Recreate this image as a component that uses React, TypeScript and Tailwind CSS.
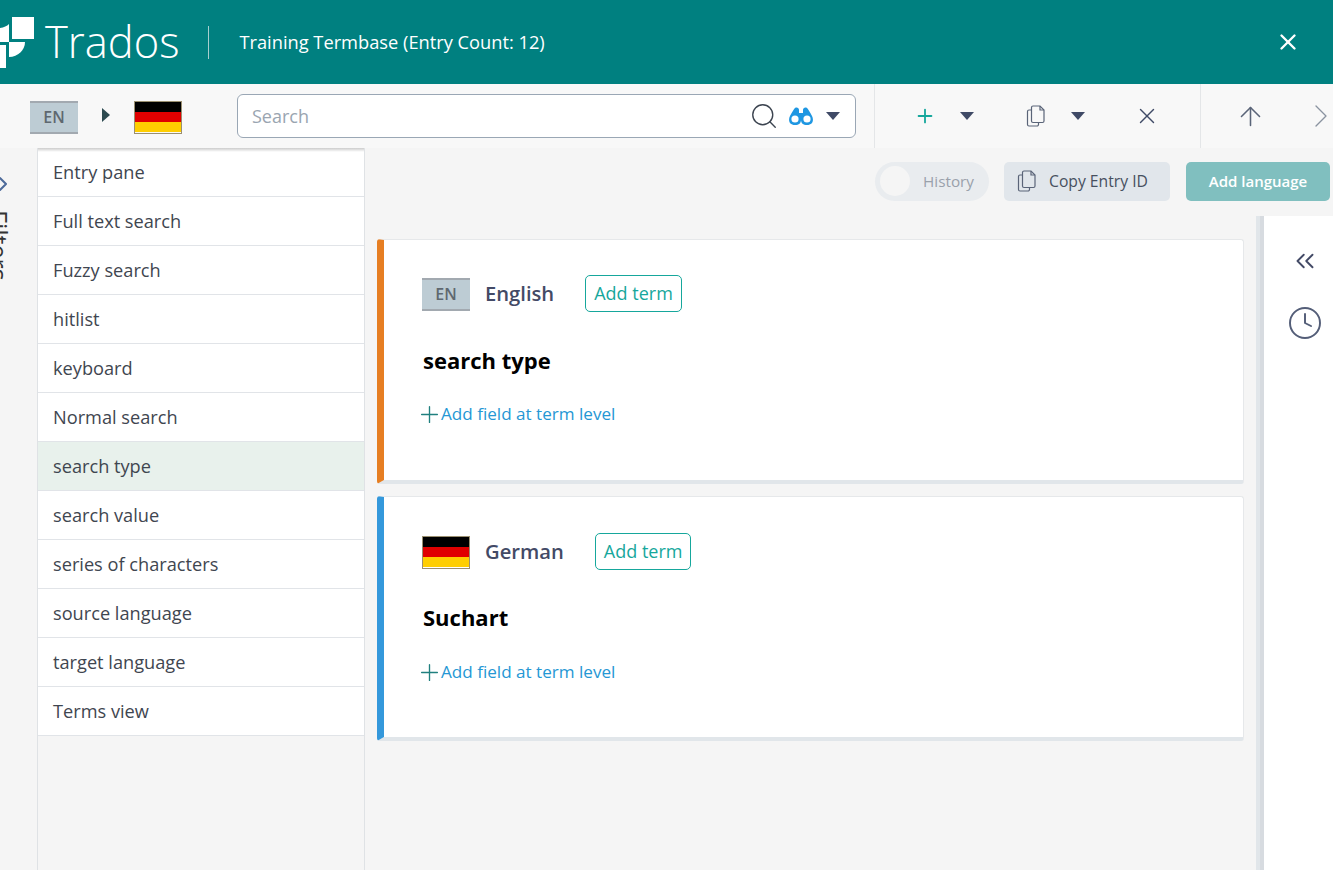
import { ChevronRight, ChevronsLeft, Clock, ArrowUp, Plus, X, Search } from "lucide-react";

const TERMS = [
  "Entry pane",
  "Full text search",
  "Fuzzy search",
  "hitlist",
  "keyboard",
  "Normal search",
  "search type",
  "search value",
  "series of characters",
  "source language",
  "target language",
  "Terms view",
];

function Logo() {
  return (
    <svg width="34" height="52" viewBox="0 0 34 52" className="shrink-0 mt-px" fill="white">
      <path d="M12 0h22v22H12z" />
      <path d="M0 11Q6 10 9 7V25H0z" />
      <path d="M9 25H25C25 33 18 40 9 40z" />
      <path d="M0 28H6V51H0z" />
    </svg>
  );
}

function Caret({ className = "" }: { className?: string }) {
  return (
    <svg width="14" height="8" viewBox="0 0 14 8" className={`shrink-0 ${className}`}>
      <path d="M0 0h14L7 8z" fill="#3f4a66" />
    </svg>
  );
}

function CopyIcon({ className = "" }: { className?: string }) {
  return (
    <svg width="20" height="22" viewBox="0 0 20 22" fill="none" stroke="#5a6478" strokeWidth="1.2" className={`shrink-0 ${className}`}>
      <path d="M7 1h7l4 4v11a1.500 1.500 0 0 1-1.500 1.500H7A1.500 1.500 0 0 1 5.500 16V2.500A1.500 1.500 0 0 1 7 1z" />
      <path d="M14 1v4h4" />
      <path d="M5.500 5H3a1.500 1.500 0 0 0-1.500 1.500v13A1.500 1.500 0 0 0 3 21h8a1.500 1.500 0 0 0 1.500-1.500v-2" />
    </svg>
  );
}

function Binoculars() {
  return (
    <svg width="26" height="18" viewBox="0 0 26 18" className="shrink-0">
      <path d="M7 1c2-1 4 0 4 2v3h4V3c0-2 2-3 4-2 1 1 3 4 5 8 2 4 1 9-5 9-4 0-6-2-6-5h-.001c0 3-2 5-6 5-6 0-7-5-5-9 2-4 4-7 5-8z" fill="#1f97e2" />
      <circle cx="7" cy="12" r="3.600" fill="white" />
      <circle cx="19" cy="12" r="3.600" fill="white" />
    </svg>
  );
}

function EnFlag() {
  return (
    <div className="w-12 h-[33px] shrink-0 bg-[#bdccd4] border-y-2 border-[#a2a9b0] flex items-center justify-center text-[16px] font-semibold text-[#5f6870]">
      EN
    </div>
  );
}

function DeFlag() {
  return (
    <div className="w-12 h-[33px] shrink-0 flex flex-col border border-[#9a8f70]">
      <div className="flex-1 bg-black" />
      <div className="flex-1 bg-[#e00000]" />
      <div className="flex-1 bg-[#ffce00]" />
    </div>
  );
}

type CardProps = {
  accent: string;
  flag: React.ReactNode;
  lang: string;
  term: string;
  top: string;
  termGap: string;
  fieldGap: string;
};

function TermCard({ accent, flag, lang, term, top, termGap, fieldGap }: CardProps) {
  return (
    <div className={`h-[245px] shrink-0 bg-white rounded-[3px] border border-[#e6e8ea] border-b-4 border-b-[#e1e6ea] border-l-[7px] ${accent} pl-[38px] ${top}`}>
      <div className="flex items-center h-[37px]">
        <div className="mt-px">{flag}</div>
        <span className="ml-[15px] text-[20.200px] font-semibold text-[#434a66]">{lang}</span>
        <button className="ml-[31px] h-[37px] px-2 rounded-[5px] border border-[#16a79c] text-[18px] text-[#16a79c]">Add term</button>
      </div>
      <div className={`${termGap} ml-px text-[22px] font-bold text-black leading-[36px]`}>{term}</div>
      <div className={`${fieldGap} flex items-center text-[17.100px] text-[#2597d4] leading-6`}>
        <Plus size={27} strokeWidth={1.2} className="text-[#20807f] -my-[2px] -ml-[6px] -mr-[2px] shrink-0" />
        <span>Add field at term level</span>
      </div>
    </div>
  );
}

export default function App() {
  return (
    <div className="w-[1333px] h-[870px] overflow-hidden flex flex-col bg-[#f5f5f5] font-['Open_Sans','Noto_Sans',sans-serif]">
      {/* header */}
      <header className="h-[84px] shrink-0 bg-[#008080] flex items-center text-white">
        <Logo />
        <span className="ml-[11px] text-[43.500px] font-light leading-none">Trados</span>
        <div className="ml-[29px] w-px h-[33px] bg-[#a7cfcf]" />
        <span className="ml-[30px] text-[18.250px]">Training Termbase (Entry Count: 12)</span>
        <X size={26} strokeWidth={2.2} className="ml-auto mr-[32px]" />
      </header>

      {/* toolbar */}
      <div className="h-[64px] shrink-0 bg-[#f8f8f8] flex items-center">
        <div className="ml-[30px] mt-[2px]"><EnFlag /></div>
        <svg width="8" height="14" viewBox="0 0 8 14" className="ml-6 -mt-[2px] shrink-0"><path d="M0 0l8 7-8 7z" fill="#2c4a50" /></svg>
        <div className="ml-[24px] mt-[2px]"><DeFlag /></div>
        <div className="ml-[55px] w-[619px] h-11 shrink-0 bg-white rounded-[6px] border border-[#9aa7b5] flex items-center pl-[14px] pr-[15px]">
          <span className="text-[18px] text-[#9aa5b1] flex-1">Search</span>
          <Search size={30} strokeWidth={1.1} className="text-[#3c4450] shrink-0" />
          <div className="ml-[9px] flex"><Binoculars /></div>
          <Caret className="ml-[12px]" />
        </div>
        <div className="ml-[18px] w-px h-full bg-[#e4e6e8] shrink-0" />
        <Plus size={22} strokeWidth={2} className="ml-[39px] text-[#16a79c] shrink-0" />
        <Caret className="ml-[24px]" />
        <CopyIcon className="ml-[52px]" />
        <Caret className="ml-[25px]" />
        <X size={26} strokeWidth={1.3} className="ml-[49px] text-[#3f4a66] shrink-0" />
        <div className="ml-[40px] w-px h-full bg-[#e4e6e8] shrink-0" />
        <ArrowUp size={31} strokeWidth={1.2} className="ml-[34px] text-[#5a6478] shrink-0" />
        <ChevronRight size={40} strokeWidth={0.8} className="ml-[35px] text-[#8a93a0] shrink-0" />
      </div>

      {/* body */}
      <div className="flex-1 flex min-h-0">
        {/* filters rail */}
        <div className="w-[38px] shrink-0 relative overflow-hidden border-r border-[#dfe2e5]">
          <ChevronRight size={24} strokeWidth={2} className="absolute -left-[9px] top-[24px] text-[#4d6a9a]" />
          <span className="absolute left-[-14px] top-[62px] text-[25px] leading-[25px] text-[#333] [writing-mode:vertical-rl]">Filters</span>
        </div>

        {/* term list */}
        <div className="w-[327px] shrink-0 relative border-r border-[#dfe2e5]">
          {TERMS.map((t) => (
            <div
              key={t}
              className={`h-[49px] pl-[15px] pt-px flex items-center border-b border-[#e1e4e8] text-[18.200px] text-[#3f4650] ${t === "search type" ? "bg-[#e8f1ec]" : "bg-white"}`}
            >
              {t}
            </div>
          ))}
          <div className="absolute inset-x-0 top-0 h-1 bg-gradient-to-b from-black/20 to-transparent" />
        </div>

        {/* entry */}
        <div className="flex-1 flex flex-col min-w-0">
          <div className="h-[68px] shrink-0 flex items-center justify-end pr-[3px] pb-[2px]">
            <div className="w-[114px] h-[39px] rounded-full bg-[#e9ecef] flex items-center pl-[5px]">
              <div className="w-[30px] h-[30px] rounded-full bg-[#f5f5f5]" />
              <span className="ml-[13px] text-[15.300px] text-[#9aa1ab]">History</span>
            </div>
            <button className="ml-[15px] w-[166px] h-[39px] rounded-[5px] bg-[#e1e6eb] flex items-center pl-[13px] text-[15.700px] text-[#47505f]">
              <CopyIcon />
              <span className="ml-[12px] mt-[2px]">Copy Entry ID</span>
            </button>
            <button className="ml-[16px] w-[144px] h-[39px] rounded-[5px] bg-[#80bfbf] text-[15px] font-semibold text-white">Add language</button>
          </div>
          <div className="flex-1 flex min-h-0">
            <div className="w-[891px] shrink-0 pl-[12px] pr-[12px] pt-[23px] flex flex-col gap-[12px]">
              <TermCard accent="border-l-[#e67e22]" flag={<EnFlag />} lang="English" term="search type" top="pt-[35px]" termGap="mt-[30px]" fieldGap="mt-6" />
              <TermCard accent="border-l-[#3498db]" flag={<DeFlag />} lang="German" term="Suchart" top="pt-[36px]" termGap="mt-[29px]" fieldGap="mt-[25px]" />
            </div>
            <div className="w-2 shrink-0 bg-[#e1e6ea] border-r-4 border-[#d7dbe0]" />
            <div className="flex-1 bg-white flex flex-col items-center pt-[30px] pl-[13px]">
              <ChevronsLeft size={30} strokeWidth={1.5} className="text-[#434a66] shrink-0" />
              <Clock size={36} strokeWidth={1.3} className="mt-[29px] text-[#545e78] shrink-0" />
            </div>
          </div>
        </div>
      </div>
    </div>
  );
}
